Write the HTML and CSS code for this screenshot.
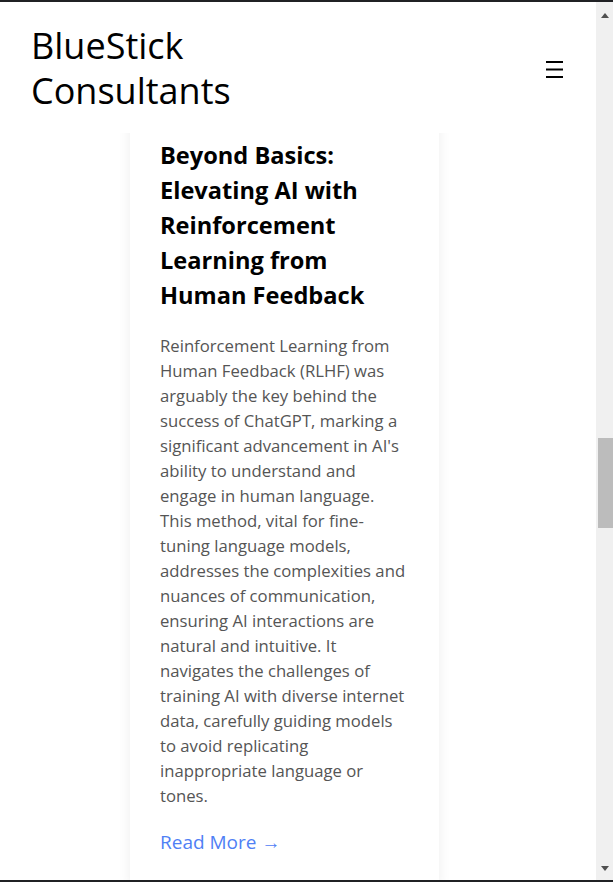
FILE: index.html
```html
<!DOCTYPE html>
<html lang="en">
<head>
<meta charset="utf-8">
<title>BlueStick Consultants</title>
<link rel="stylesheet" href="styles.css">
</head>
<body>
<div class="window">
  <div class="viewport">
    <header class="site-header">
      <div class="logo">BlueStick Consultants</div>
      <button class="menu-btn" aria-label="Menu">
        <svg width="19" height="18" viewBox="0 0 19 18"><path d="M1 2h17M1 9.5h17M1 17h17" stroke="#000" stroke-width="2" fill="none"/></svg>
      </button>
    </header>
    <main class="content">
      <article class="card">
        <h2 class="card-title">Beyond Basics: Elevating AI with Reinforcement Learning from Human Feedback</h2>
        <p class="card-text">Reinforcement Learning from Human Feedback (RLHF) was arguably the key behind the success of ChatGPT, marking a significant advancement in AI's ability to understand and engage in human language. This method, vital for fine-tuning language models, addresses the complexities and nuances of communication, ensuring AI interactions are natural and intuitive. It navigates the challenges of training AI with diverse internet data, carefully guiding models to avoid replicating inappropriate language or tones.</p>
        <a class="read-more" href="#">Read More →</a>
      </article>
    </main>
  </div>
  <div class="scrollbar">
    <span class="arrow up"></span>
    <div class="track"><div class="thumb"></div></div>
    <span class="arrow down"></span>
  </div>
</div>
</body>
</html>
```
FILE: styles.css
```css
* { box-sizing: border-box; }
html, body { margin: 0; padding: 0; background: #fff; }
body { font-family: "Open Sans", "Noto Sans", sans-serif; overflow: hidden; }

.window {
  width: 613px;
  height: 882px;
  display: flex;
  border-top: 2px solid #202124;
  border-bottom: 2px solid #202124;
}

.viewport {
  flex: 1;
  display: flex;
  flex-direction: column;
  overflow: hidden;
}

.site-header {
  height: 131px;
  flex: none;
  display: flex;
  align-items: center;
  justify-content: space-between;
  padding: 0 32px 0 31px;
  background: #fff;
  position: relative;
  z-index: 2;
}

.logo {
  font-size: 36px;
  line-height: 45px;
  width: 240px;
  color: #000;
}

.menu-btn {
  border: 0;
  background: none;
  padding: 0;
  display: flex;
  margin-top: 2px;
}

.content {
  flex: 1;
  overflow: hidden;
  padding-left: 130px;
}

.card {
  width: 309px;
  margin-top: -25px;
  padding: 30px;
  background: #fff;
  box-shadow: 0 2px 12px rgba(0, 0, 0, 0.07);
}

.card-title {
  margin: 0 0 20px;
  font-size: 23.6px;
  line-height: 35px;
  font-weight: 700;
  color: #000;
}

.card-text {
  margin: 0 0 22px;
  font-size: 16.7px;
  line-height: 25px;
  color: #555;
}

.read-more {
  font-size: 19px;
  line-height: 25px;
  color: #4f80f5;
  text-decoration: none;
}

.scrollbar {
  width: 17px;
  flex: none;
  background: #f0f0f0;
  display: flex;
  flex-direction: column;
  align-items: center;
  padding: 11px 0 9px;
}

.arrow {
  width: 0;
  height: 0;
  border-left: 4.5px solid transparent;
  border-right: 4.5px solid transparent;
  margin-left: 1px;
}
.arrow.up { border-bottom: 5px solid #505050; }
.arrow.down { border-top: 5px solid #505050; }

.track {
  flex: 1;
  width: 100%;
  padding-top: 420px;
  padding-left: 2px;
}

.thumb {
  height: 90px;
  background: #bcbcbc;
}
```
